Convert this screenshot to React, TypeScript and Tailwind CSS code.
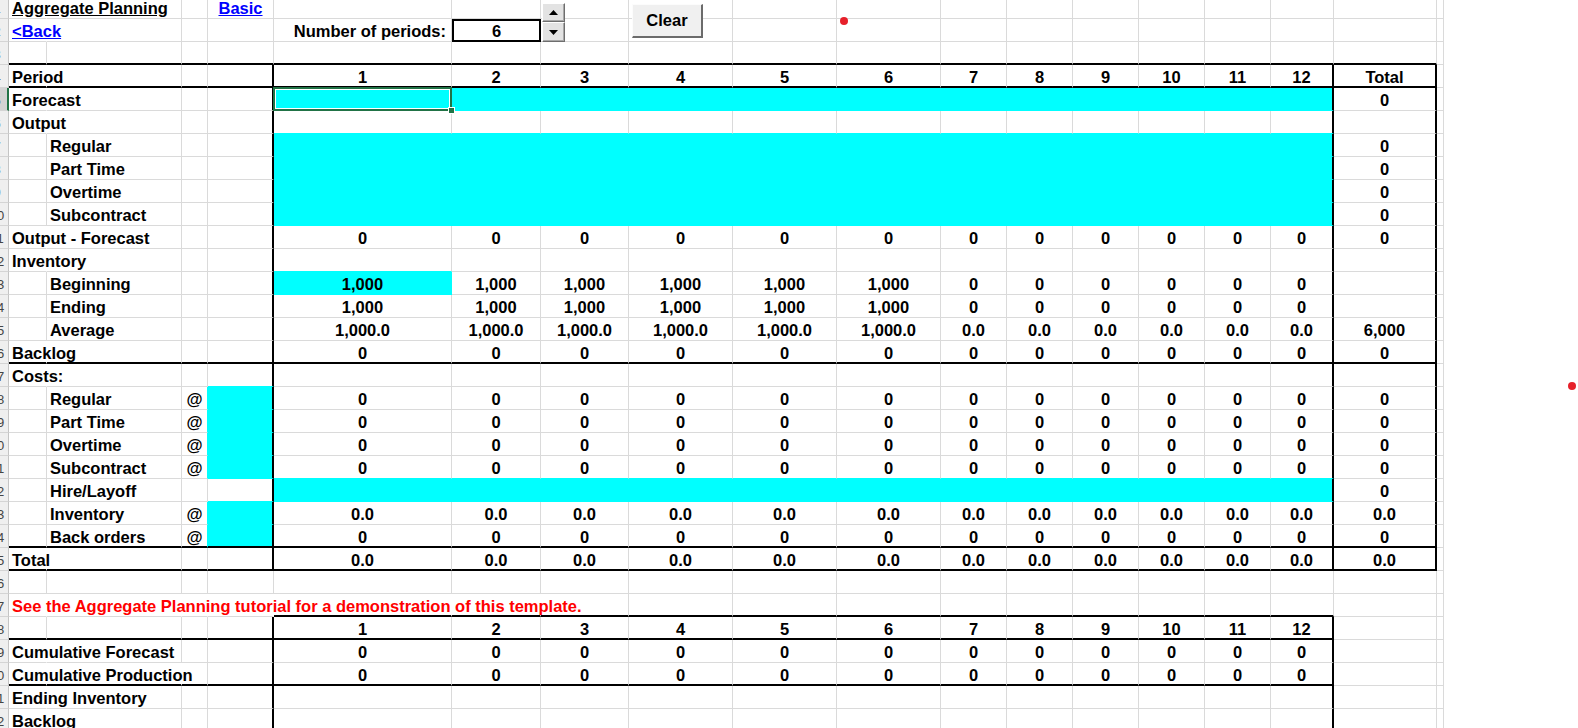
import React from 'react'

type Cell = {
  text?: string
  align?: 'left' | 'center' | 'right'
  tone?: 'link' | 'red'
  underline?: boolean
  cyan?: boolean
  over?: number
  box?: boolean
}

type Row = Record<number, Cell>

const A = 1
const B = 2
const C = 3
const D = 4
const E = 5
const P = 16
const TOTAL = 17
const LAST = 18
const ROW_COUNT = 32

const fill = (v: string, n = 12) => Array.from({ length: n }, () => v)
const split = (a: string, b: string) => [...fill(a, 6), ...fill(b, 6)]
const nums = Array.from({ length: 12 }, (_, i) => String(i + 1))

const build = (opts: {
  label?: string
  over?: number
  sub?: string
  at?: boolean
  periods?: string[]
  cyan?: boolean
  firstCyan?: boolean
  total?: string
}): Row => {
  const row: Row = {}
  if (opts.label) row[A] = { text: opts.label, over: opts.over ?? 1 }
  if (opts.sub) row[B] = { text: opts.sub }
  if (opts.at) {
    row[C] = { text: '@', align: 'center' }
    row[D] = { cyan: true }
  }
  for (let p = 0; p < 12; p++) {
    const text = opts.periods?.[p]
    const cyan = opts.cyan || (opts.firstCyan && p === 0)
    if (text !== undefined || cyan) row[E + p] = { text, align: 'center', cyan }
  }
  if (opts.total !== undefined) row[TOTAL] = { text: opts.total, align: 'center' }
  return row
}

const ROWS: Row[] = [
  {
    [A]: { text: 'Aggregate Planning', underline: true, over: 1 },
    [D]: { text: 'Basic', tone: 'link', underline: true, align: 'center' }
  },
  {
    [A]: { text: '<Back', tone: 'link', underline: true, over: 1 },
    [E]: { text: 'Number of periods:', align: 'right' },
    [E + 1]: { text: '6', align: 'center', box: true }
  },
  {},
  build({ label: 'Period', periods: nums, total: 'Total' }),
  build({ label: 'Forecast', cyan: true, total: '0' }),
  build({ label: 'Output', total: '' }),
  build({ sub: 'Regular', cyan: true, total: '0' }),
  build({ sub: 'Part Time', cyan: true, total: '0' }),
  build({ sub: 'Overtime', cyan: true, total: '0' }),
  build({ sub: 'Subcontract', cyan: true, total: '0' }),
  build({ label: 'Output - Forecast', periods: fill('0'), total: '0' }),
  build({ label: 'Inventory' }),
  build({ sub: 'Beginning', periods: split('1,000', '0'), firstCyan: true }),
  build({ sub: 'Ending', periods: split('1,000', '0') }),
  build({ sub: 'Average', periods: split('1,000.0', '0.0'), total: '6,000' }),
  build({ label: 'Backlog', periods: fill('0'), total: '0' }),
  build({ label: 'Costs:' }),
  build({ sub: 'Regular', at: true, periods: fill('0'), total: '0' }),
  build({ sub: 'Part Time', at: true, periods: fill('0'), total: '0' }),
  build({ sub: 'Overtime', at: true, periods: fill('0'), total: '0' }),
  build({ sub: 'Subcontract', at: true, periods: fill('0'), total: '0' }),
  build({ sub: 'Hire/Layoff', cyan: true, total: '0' }),
  build({ sub: 'Inventory', at: true, periods: fill('0.0'), total: '0.0' }),
  build({ sub: 'Back orders', at: true, periods: fill('0'), total: '0' }),
  build({ label: 'Total', periods: fill('0.0'), total: '0.0' }),
  {},
  {
    [A]: {
      text: 'See the Aggregate Planning tutorial for a demonstration of this template.',
      tone: 'red',
      over: 6
    }
  },
  build({ periods: nums }),
  build({ label: 'Cumulative Forecast', periods: fill('0') }),
  build({ label: 'Cumulative Production', over: 2, periods: fill('0') }),
  build({ label: 'Ending Inventory' }),
  build({ label: 'Backlog' })
]

const cellAt = (r: number, c: number): Cell | undefined => ROWS[r - 1]?.[c]
const isCyan = (r: number, c: number) => !!cellAt(r, c)?.cyan

const thickBottom = (r: number, c: number) =>
  ([3, 4, 16, 24, 25].includes(r) && c >= A && c <= TOTAL) ||
  (r === 27 && c >= E && c <= P) ||
  ((r === 28 || r === 30) && c >= A && c <= P)

const thickRight = (r: number, c: number) => {
  if (c === D || c === P) return (r >= 4 && r <= 25) || r >= 28
  if (c === TOTAL) return r >= 4 && r <= 25
  return false
}

const cellClass = (r: number, c: number, hidden: Set<number>) => {
  const cell = cellAt(r, c)
  const cls = ['min-w-0 whitespace-nowrap px-[3px]']
  if (r === 1) cls.push('-mt-[4px]')

  if (cell?.box) {
    cls.push('border-2 border-black leading-[21px]')
  } else {
    cls.push('leading-[25px]')
    if (thickRight(r, c)) cls.push('border-r-2 border-r-black')
    else if (hidden.has(c)) cls.push('border-r border-r-transparent')
    else if (cell?.cyan || isCyan(r, c + 1)) cls.push('border-r border-r-[#00ffff]')
    else cls.push('border-r border-r-[#dadada]')

    if (thickBottom(r, c)) cls.push('border-b-2 border-b-black')
    else if (cell?.cyan || isCyan(r + 1, c)) cls.push('border-b border-b-[#00ffff]')
    else cls.push('border-b border-b-[#dadada]')
  }

  if (cell?.cyan) cls.push('bg-[#00ffff]')
  if (cell?.align === 'center') cls.push('text-center')
  if (cell?.align === 'right') cls.push('text-right pr-[5px]')
  if (cell?.tone === 'link') cls.push('text-[#0000ff]')
  if (cell?.tone === 'red') cls.push('text-[#ff0000]')
  if (cell?.underline) cls.push('underline')
  if (r === 5 && c === E) cls.push('relative')
  return cls.join(' ')
}

const RowHeader = ({ r }: { r: number }) => {
  const selected = r === 5
  return (
    <div
      className={`overflow-hidden border-b border-b-[#d4d4d4] leading-[25px] ${
        r === 1 ? '-mt-[4px]' : ''
      } ${
        selected
          ? 'border-r-2 border-r-[#217346] bg-[#d3d3d3]'
          : 'border-r border-r-[#c4c4c4] bg-[#efefef]'
      }`}
    >
      <div className="-ml-[18px] w-[30px] text-center text-[13px] font-normal text-[#444]">
        {r}
      </div>
    </div>
  )
}

const Selection = () => (
  <>
    <div className="pointer-events-none absolute -bottom-[1px] -left-[1px] -right-[1px] -top-[1px] z-20 border-2 border-[#217346] shadow-[inset_0_0_0_1px_#ffffff]" />
    <div className="absolute -bottom-[4px] -right-[4px] z-30 h-[7px] w-[7px] border border-white bg-[#217346]" />
  </>
)

const SpinButton = ({ up }: { up: boolean }) => (
  <div
    className={`flex items-center justify-center border border-b-[#6e6e6e] border-l-white border-r-[#6e6e6e] border-t-white bg-[#e3e3e3] shadow-[inset_-1px_-1px_0_#a8a8a8] ${
      up ? 'h-[19px]' : 'h-[20px]'
    }`}
  >
    <svg width="9" height="5" viewBox="0 0 9 5">
      <path d={up ? 'M0 5H9L4.5 0Z' : 'M0 0H9L4.5 5Z'} fill="#000" />
    </svg>
  </div>
)

export default function App() {
  const cells: React.ReactNode[] = []
  for (let r = 1; r <= ROW_COUNT; r++) {
    const hidden = new Set<number>()
    const row = ROWS[r - 1] ?? {}
    Object.entries(row).forEach(([key, cell]) => {
      const c = Number(key)
      for (let i = 0; i < (cell.over ?? 0); i++) hidden.add(c + i)
    })
    cells.push(<RowHeader key={`h${r}`} r={r} />)
    for (let c = A; c <= LAST; c++) {
      const cell = row[c]
      cells.push(
        <div key={`${r}-${c}`} className={cellClass(r, c, hidden)}>
          {cell?.text}
          {r === 5 && c === E && <Selection />}
        </div>
      )
    }
  }

  return (
    <div className="relative h-[728px] w-[1578px] overflow-hidden bg-white font-['Liberation_Sans',Arial,sans-serif] text-[16.5px] font-bold text-black">
      <div className="grid w-[1443px] grid-cols-[9px_38px_135px_26px_66px_178px_89px_88px_104px_104px_104px_66px_66px_66px_66px_66px_63px_103px_6px] grid-rows-[19px_repeat(31,23px)]">
        {cells}
      </div>

      <div className="absolute left-[542px] top-[3px] flex w-[23px] flex-col">
        <SpinButton up />
        <SpinButton up={false} />
      </div>

      <button
        type="button"
        className="absolute left-[632px] top-[4px] flex h-[34px] w-[71px] items-center justify-center border-b-2 border-l border-r-2 border-t border-b-[#6b6b6b] border-l-[#fcfcfc] border-r-[#6b6b6b] border-t-[#fcfcfc] bg-[#f0f0f0] pb-[1px] font-bold"
      >
        Clear
      </button>

      <span className="absolute left-[840px] top-[17px] h-[8px] w-[8px] rounded-full bg-[#e6202a]" />
      <span className="absolute left-[1568px] top-[382px] h-[8px] w-[8px] rounded-full bg-[#e6202a]" />
    </div>
  )
}
